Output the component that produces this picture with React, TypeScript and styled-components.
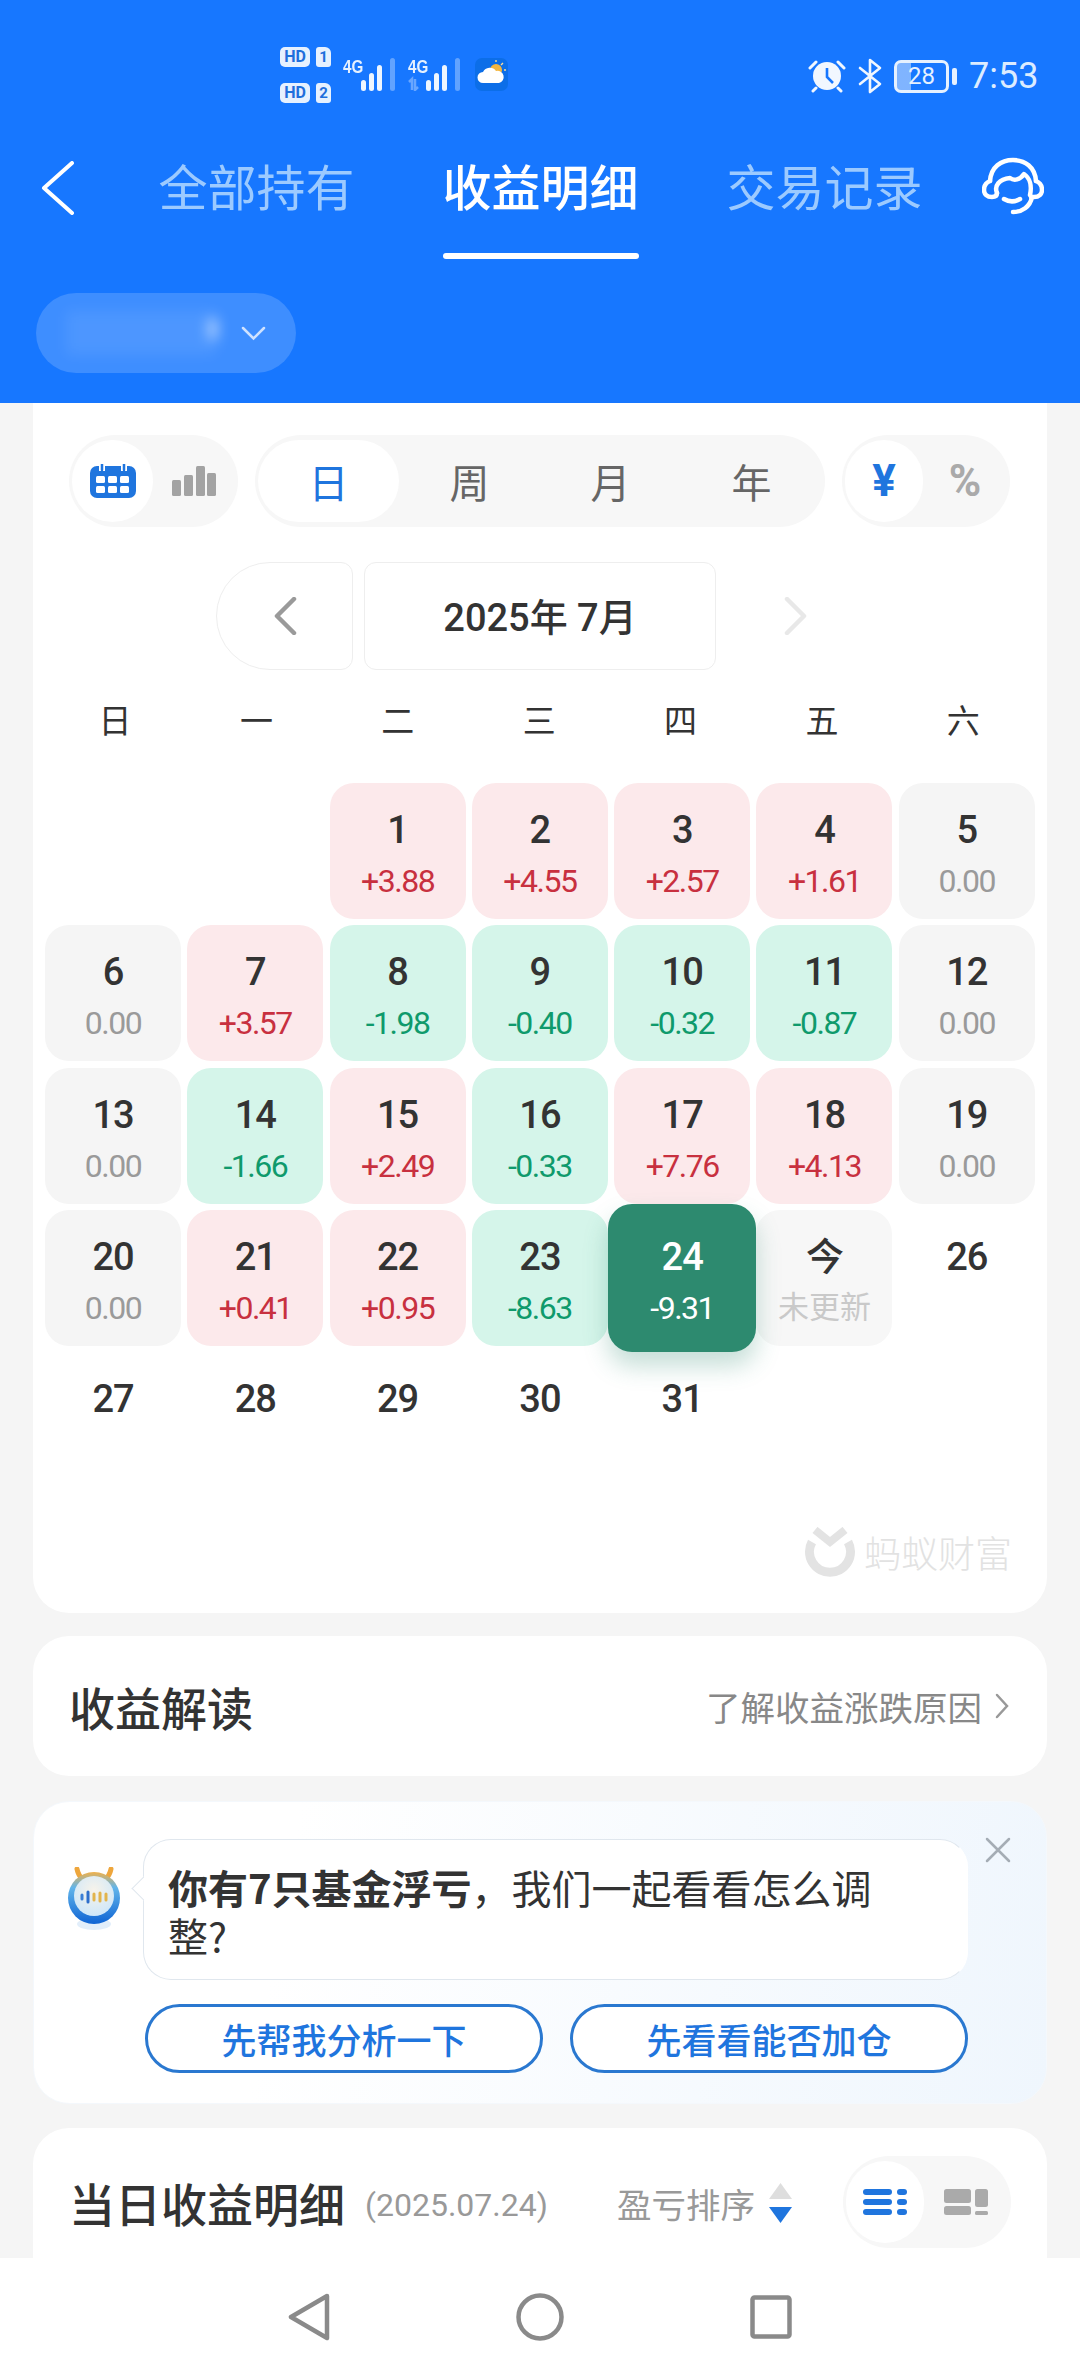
import { createGlobalStyle, styled } from 'styled-components';

const sans = `Roboto, "Noto Sans CJK SC", sans-serif`;
const cjk = `"Noto Sans CJK SC", Roboto, sans-serif`;

const GlobalStyle = createGlobalStyle`
  html, body {
    margin: 0;
    padding: 0;
    background: #f5f5f5;
  }
  * {
    box-sizing: border-box;
  }
`;

type Day = { date: string; value?: string; selected?: boolean; today?: boolean };

const days: (Day | null)[] = [
  null,
  null,
  { date: '1', value: '+3.88' },
  { date: '2', value: '+4.55' },
  { date: '3', value: '+2.57' },
  { date: '4', value: '+1.61' },
  { date: '5', value: '0.00' },
  { date: '6', value: '0.00' },
  { date: '7', value: '+3.57' },
  { date: '8', value: '-1.98' },
  { date: '9', value: '-0.40' },
  { date: '10', value: '-0.32' },
  { date: '11', value: '-0.87' },
  { date: '12', value: '0.00' },
  { date: '13', value: '0.00' },
  { date: '14', value: '-1.66' },
  { date: '15', value: '+2.49' },
  { date: '16', value: '-0.33' },
  { date: '17', value: '+7.76' },
  { date: '18', value: '+4.13' },
  { date: '19', value: '0.00' },
  { date: '20', value: '0.00' },
  { date: '21', value: '+0.41' },
  { date: '22', value: '+0.95' },
  { date: '23', value: '-8.63' },
  { date: '24', value: '-9.31', selected: true },
  { date: '今', value: '未更新', today: true },
  { date: '26' },
  { date: '27' },
  { date: '28' },
  { date: '29' },
  { date: '30' },
  { date: '31' },
];

type Tone = 'up' | 'down' | 'flat' | 'today' | 'selected' | 'none';

const toneOf = (day: Day): Tone => {
  if (day.selected) return 'selected';
  if (day.today) return 'today';
  if (!day.value) return 'none';
  if (day.value.startsWith('+')) return 'up';
  if (day.value.startsWith('-')) return 'down';
  return 'flat';
};

const cellBackground: Record<Tone, string> = {
  up: '#fce9eb',
  down: '#d5f5ea',
  flat: '#f5f5f5',
  today: '#f7f7f7',
  selected: '#2d8a6f',
  none: 'transparent',
};

const valueColor: Record<Tone, string> = {
  up: '#c8303f',
  down: '#0f9a6c',
  flat: '#9a9a9a',
  today: '#c9c9c9',
  selected: '#ffffff',
  none: '#333333',
};

const SignalBars = ({ arrows }: { arrows?: boolean }) => (
  <svg width="54" height="33" viewBox="0 0 54 33">
    {arrows && (
      <path
        d="M4 32V21L1 24M7 21V32L10 29"
        fill="none"
        stroke="#fff"
        strokeOpacity="0.35"
        strokeWidth="2.5"
      />
    )}
    <g transform="translate(18 0)" fill="#eef6ff">
      <rect x="0" y="22" width="5" height="11" rx="2.5" />
      <rect x="8" y="15" width="5" height="18" rx="2.5" />
      <rect x="16" y="7" width="5" height="26" rx="2.5" />
      <rect x="29" y="0" width="5" height="33" rx="2.5" fillOpacity="0.35" />
    </g>
  </svg>
);

const WeatherIcon = () => (
  <svg width="33" height="33" viewBox="0 0 33 33">
    <rect width="33" height="33" rx="7" fill="#0c6ee8" />
    <circle cx="21" cy="12" r="6" fill="#f3b63f" />
    <path d="M21 2v2M28 5l-2 2M31 12h-2" stroke="#f8dc9a" strokeWidth="1.4" />
    <path d="M8 25a5.5 5.5 0 0 1 0-11 7.5 7.5 0 0 1 13-1 6 6 0 0 1 3 12z" fill="#fff" />
  </svg>
);

const AlarmIcon = () => (
  <svg width="38" height="34" viewBox="0 0 38 34">
    <circle cx="19" cy="17" r="14" fill="#f1f7ff" />
    <path d="M19 9v9l6 6" fill="none" stroke="#1777ff" strokeWidth="2.6" />
    <path d="M2 9l6-6M36 9l-6-6" stroke="#f1f7ff" strokeWidth="3" strokeLinecap="round" />
    <path d="M8 29l-3 3M30 29l3 3" stroke="#f1f7ff" strokeWidth="3" strokeLinecap="round" />
  </svg>
);

const BluetoothIcon = () => (
  <svg width="24" height="36" viewBox="0 0 24 36">
    <path
      d="M2 10l20 16-10 8V2l10 8L2 26"
      fill="none"
      stroke="#f1f7ff"
      strokeWidth="2.6"
      strokeLinejoin="round"
      strokeLinecap="round"
    />
  </svg>
);

const BackIcon = () => (
  <svg width="34" height="54" viewBox="0 0 34 54">
    <path
      d="M31 2L3 27l28 25"
      fill="none"
      stroke="#fff"
      strokeWidth="4"
      strokeLinecap="round"
      strokeLinejoin="round"
    />
  </svg>
);

const HeadsetIcon = () => (
  <svg width="62" height="58" viewBox="0 0 62 58">
    <g fill="none" stroke="#fff" strokeWidth="4.5" strokeLinecap="round" strokeLinejoin="round">
      <path d="M8 24C9 10 19 3 31 3s22 7 23 21" />
      <path d="M8 24c-5 2-6 6-6 9 0 4 3 7 8 7 3 0 5-1 5-4" />
      <path d="M54 24c5 2 6 6 6 9 0 4-3 7-8 7h-3" />
      <path d="M15 36c-3-7 2-14 13-15 4 3 10 2 14-4 6 4 8 12 6 21" />
      <path d="M22 42c5 3 11 3 16 0" />
      <path d="M50 40c-2 10-10 15-19 15" />
    </g>
  </svg>
);

const SmallChevron = () => (
  <svg width="25" height="15" viewBox="0 0 25 15">
    <path d="M2 2l10.5 10.5L23 2" fill="none" stroke="#cfe2ff" strokeWidth="2.5" strokeLinecap="round" />
  </svg>
);

const CalendarIcon = () => (
  <svg width="46" height="34" viewBox="0 0 46 34">
    <rect y="2" width="46" height="32" rx="7" fill="#1f75de" />
    <path d="M12 0v7M34 0v7" stroke="#fff" strokeWidth="6" />
    <path d="M12 0v6M34 0v6" stroke="#1f75de" strokeWidth="2.5" strokeLinecap="round" />
    <g fill="#fff">
      {[6, 18, 30].map((x) =>
        [12, 22].map((y) => <rect key={`${x}-${y}`} x={x} y={y} width="9" height="7" rx="1.5" />),
      )}
    </g>
  </svg>
);

const BarsIcon = () => (
  <svg width="44" height="30" viewBox="0 0 44 30">
    <g fill="#a3a3a3">
      <rect x="0" y="14" width="9" height="16" rx="1.5" />
      <rect x="12" y="9" width="9" height="21" rx="1.5" />
      <rect x="24" y="0" width="9" height="30" rx="1.5" />
      <rect x="35" y="7" width="9" height="23" rx="1.5" />
    </g>
  </svg>
);

const NavChevron = ({ dir, color }: { dir: 'left' | 'right'; color: string }) => (
  <svg width="24" height="38" viewBox="0 0 24 38">
    <path
      d={dir === 'left' ? 'M21 2L4 19l17 17' : 'M3 2l17 17L3 36'}
      fill="none"
      stroke={color}
      strokeWidth="4.5"
      strokeLinecap="round"
      strokeLinejoin="round"
    />
  </svg>
);

const AntLogo = () => (
  <svg width="50" height="51" viewBox="0 0 50 51">
    <g fill="none" stroke="#e3e3e3">
      <path d="M10 3l15 12L40 3" strokeWidth="8" />
      <path d="M7 15a20.5 20.5 0 1 0 36 0" strokeWidth="9" />
    </g>
  </svg>
);

const RightArrow = () => (
  <svg width="16" height="26" viewBox="0 0 16 26">
    <path d="M3 2l10 11L3 24" fill="none" stroke="#999" strokeWidth="2.5" strokeLinecap="round" />
  </svg>
);

const AssistantAvatar = () => (
  <svg width="54" height="64" viewBox="0 0 54 64">
    <defs>
      <linearGradient id="ring" x1="0" y1="0" x2="0" y2="1">
        <stop offset="0" stopColor="#f0b14b" />
        <stop offset="0.3" stopColor="#62b5ea" />
        <stop offset="1" stopColor="#0f64d4" />
      </linearGradient>
      <radialGradient id="face" cx="0.5" cy="0.35" r="0.7">
        <stop offset="0" stopColor="#f7f3ea" />
        <stop offset="1" stopColor="#cbe6fb" />
      </radialGradient>
    </defs>
    <ellipse cx="27" cy="57" rx="17" ry="6" fill="#cfe3f7" opacity="0.6" />
    <path
      d="M10 2c1 5 3 8 6 11M44 2c-1 5-3 8-6 11"
      fill="none"
      stroke="#eea63c"
      strokeWidth="5"
      strokeLinecap="round"
    />
    <circle cx="27" cy="31" r="26" fill="url(#ring)" />
    <circle cx="27" cy="29" r="20" fill="url(#face)" />
    <g strokeWidth="3" strokeLinecap="round">
      <path d="M15 28v4" stroke="#3a7fd6" />
      <path d="M21 25v10" stroke="#2d6fcc" />
      <path d="M27 27v6" stroke="#e2b44c" />
      <path d="M33 26v8" stroke="#e2b44c" />
      <path d="M39 27v6" stroke="#e2b44c" />
    </g>
  </svg>
);

const CloseIcon = () => (
  <svg width="26" height="26" viewBox="0 0 26 26">
    <path d="M2 2l22 22M24 2L2 24" stroke="#a5adb5" strokeWidth="2.5" strokeLinecap="round" />
  </svg>
);

const SortIcon = () => (
  <svg width="23" height="40" viewBox="0 0 23 40">
    <path d="M11.5 0L23 16H0z" fill="#dedede" />
    <path d="M0 24h23L11.5 40z" fill="#1f75de" />
  </svg>
);

const ListIcon = () => (
  <svg width="44" height="26" viewBox="0 0 44 26">
    <g fill="#1f75de">
      {[0, 10, 20].map((y) => (
        <g key={y}>
          <rect x="0" y={y} width="29" height="6" rx="3" />
          <rect x="34" y={y} width="10" height="6" rx="3" />
        </g>
      ))}
    </g>
  </svg>
);

const CardsIcon = () => (
  <svg width="44" height="26" viewBox="0 0 44 26">
    <g fill="#aaaaaa">
      <rect x="0" y="0" width="27" height="14" rx="2.5" />
      <rect x="0" y="17" width="27" height="9" rx="2.5" />
      <rect x="31" y="0" width="13" height="18" rx="2.5" />
      <rect x="31" y="22" width="13" height="4" rx="1.5" />
    </g>
  </svg>
);

const App = () => (
  <>
    <GlobalStyle />
    <Screen>
      <Header>
        <StatusBar>
          <SimColumn>
            <SimRow>
              <HdBadge>HD</HdBadge>
              <SimBadge>1</SimBadge>
            </SimRow>
            <SimRow>
              <HdBadge>HD</HdBadge>
              <SimBadge>2</SimBadge>
            </SimRow>
          </SimColumn>
          <SignalGroup>
            <NetworkLabel>4G</NetworkLabel>
            <SignalBars />
          </SignalGroup>
          <SignalGroup>
            <NetworkLabel>4G</NetworkLabel>
            <SignalBars arrows />
          </SignalGroup>
          <WeatherSlot>
            <WeatherIcon />
          </WeatherSlot>
          <StatusRight>
            <AlarmIcon />
            <BluetoothIcon />
            <BatteryWrap>
              <Battery>28</Battery>
              <BatteryTip />
            </BatteryWrap>
            <Clock>7:53</Clock>
          </StatusRight>
        </StatusBar>

        <TabRow>
          <BackSlot>
            <BackIcon />
          </BackSlot>
          <Tabs>
            <Tab>
              <TabLabel>全部持有</TabLabel>
            </Tab>
            <Tab>
              <TabLabel $active>收益明细</TabLabel>
              <TabLine />
            </Tab>
            <Tab>
              <TabLabel>交易记录</TabLabel>
            </Tab>
          </Tabs>
          <HeadsetSlot>
            <HeadsetIcon />
          </HeadsetSlot>
        </TabRow>

        <AccountPill>
          <BlurredName />
          <SmallChevron />
        </AccountPill>
      </Header>

      <Content>
        <CalendarCard>
          <Controls>
            <Segment>
              <SegmentItem $active $width={81}>
                <CalendarIcon />
              </SegmentItem>
              <SegmentItem $width={82}>
                <BarsIcon />
              </SegmentItem>
            </Segment>
            <Segment>
              <SegmentItem $active $width={141}>
                <PeriodLabel $active>日</PeriodLabel>
              </SegmentItem>
              {['周', '月', '年'].map((label) => (
                <SegmentItem key={label} $width={141}>
                  <PeriodLabel>{label}</PeriodLabel>
                </SegmentItem>
              ))}
            </Segment>
            <Segment>
              <SegmentItem $active $width={78}>
                <UnitLabel $active>¥</UnitLabel>
              </SegmentItem>
              <SegmentItem $width={84}>
                <UnitLabel>%</UnitLabel>
              </SegmentItem>
            </Segment>
          </Controls>

          <MonthNav>
            <PrevButton>
              <NavChevron dir="left" color="#9a9a9a" />
            </PrevButton>
            <MonthLabel>2025年 7月</MonthLabel>
            <NextButton>
              <NavChevron dir="right" color="#e8e8e8" />
            </NextButton>
          </MonthNav>

          <Weekdays>
            {['日', '一', '二', '三', '四', '五', '六'].map((d) => (
              <Weekday key={d}>{d}</Weekday>
            ))}
          </Weekdays>

          <DayGrid>
            {days.map((day, i) => {
              if (!day) return <div key={i} />;
              const tone = toneOf(day);
              return (
                <DayCell key={day.date} $tone={tone}>
                  <DayNumber $tone={tone}>{day.date}</DayNumber>
                  {day.value && <DayValue $tone={tone}>{day.value}</DayValue>}
                </DayCell>
              );
            })}
          </DayGrid>

          <Brand>
            <AntLogo />
            <BrandName>蚂蚁财富</BrandName>
          </Brand>
        </CalendarCard>

        <InsightCard>
          <CardTitle>收益解读</CardTitle>
          <InsightLink>
            了解收益涨跌原因
            <RightArrow />
          </InsightLink>
        </InsightCard>

        <AdviceCard>
          <AvatarSlot>
            <AssistantAvatar />
          </AvatarSlot>
          <AdviceBody>
            <Bubble>
              <strong>你有7只基金浮亏</strong>，我们一起看看怎么调整?
            </Bubble>
            <AdviceActions>
              <AdviceButton>先帮我分析一下</AdviceButton>
              <AdviceButton>先看看能否加仓</AdviceButton>
            </AdviceActions>
          </AdviceBody>
          <CloseSlot>
            <CloseIcon />
          </CloseSlot>
        </AdviceCard>

        <DetailCard>
          <DetailTitle>当日收益明细</DetailTitle>
          <DetailDate>(2025.07.24)</DetailDate>
          <SortGroup>
            <SortLabel>盈亏排序</SortLabel>
            <SortIcon />
          </SortGroup>
          <Segment>
            <SegmentItem $active $width={78}>
              <ListIcon />
            </SegmentItem>
            <SegmentItem $width={84}>
              <CardsIcon />
            </SegmentItem>
          </Segment>
        </DetailCard>
      </Content>

      <NavBar>
        <NavSlot>
          <svg width="42" height="48" viewBox="0 0 42 48">
            <path d="M39 3L3 24l36 21z" fill="none" stroke="#8a8a8a" strokeWidth="4.5" strokeLinejoin="round" />
          </svg>
        </NavSlot>
        <NavSlot>
          <svg width="48" height="48" viewBox="0 0 48 48">
            <circle cx="24" cy="24" r="21.5" fill="none" stroke="#8a8a8a" strokeWidth="4.5" />
          </svg>
        </NavSlot>
        <NavSlot>
          <svg width="42" height="44" viewBox="0 0 42 44">
            <rect x="2.5" y="2.5" width="37" height="39" rx="2" fill="none" stroke="#8a8a8a" strokeWidth="4.5" />
          </svg>
        </NavSlot>
      </NavBar>
    </Screen>
  </>
);

const Screen = styled.div`
  width: 1080px;
  height: 2376px;
  display: flex;
  flex-direction: column;
  overflow: hidden;
  background: #f5f5f5;
  font-family: ${cjk};
  color: #333;
`;

const Header = styled.header`
  flex: none;
  height: 403px;
  background: #1777ff;
`;

const StatusBar = styled.div`
  height: 116px;
  display: flex;
  padding: 47px 43px 0 280px;
`;

const SimColumn = styled.div`
  display: flex;
  flex-direction: column;
  gap: 16px;
  width: 60px;
`;

const SimRow = styled.div`
  display: flex;
  gap: 6px;
`;

const HdBadge = styled.span`
  width: 30px;
  height: 20px;
  border-radius: 5px;
  background: #e6f1ff;
  color: #1f6fdc;
  font: 700 16px/20px ${sans};
  text-align: center;
`;

const SimBadge = styled.span`
  width: 15px;
  height: 20px;
  border-radius: 3px 6px 3px 3px;
  background: #e6f1ff;
  color: #1f6fdc;
  font: 700 15px/20px ${sans};
  text-align: center;
`;

const SignalGroup = styled.div`
  position: relative;
  display: flex;
  margin-top: 11px;
  margin-left: 3px;
  width: 62px;
  height: 33px;
`;

const NetworkLabel = styled.span`
  position: absolute;
  left: 0;
  top: 0;
  color: #e6f1ff;
  font: 700 19px/17px "Liberation Sans", sans-serif;
  transform: scaleX(0.8);
  transform-origin: left;
`;

const WeatherSlot = styled.div`
  margin-top: 11px;
  margin-left: 5px;
  height: 33px;
`;

const StatusRight = styled.div`
  margin-left: auto;
  display: flex;
  align-items: center;
  gap: 12px;
  height: 50px;
  margin-top: 4px;
`;

const BatteryWrap = styled.div`
  display: flex;
  align-items: center;
  gap: 3px;
`;

const Battery = styled.div`
  width: 55px;
  height: 33px;
  border: 3px solid #e6f1ff;
  border-radius: 7px;
  background: linear-gradient(90deg, rgba(255, 255, 255, 0.45) 28%, transparent 28%);
  color: #e6f1ff;
  font: 400 24px/27px ${sans};
  text-align: center;
`;

const BatteryTip = styled.div`
  width: 5px;
  height: 17px;
  border-radius: 2px;
  background: #e6f1ff;
`;

const Clock = styled.span`
  width: 68px;
  color: #dcecff;
  font: 400 36px/50px ${sans};
  white-space: nowrap;
`;

const TabRow = styled.nav`
  height: 146px;
  display: flex;
  align-items: flex-start;
`;

const BackSlot = styled.div`
  width: 160px;
  padding: 45px 0 0 41px;
`;

const Tabs = styled.div`
  display: flex;
  gap: 91px;
`;

const Tab = styled.div`
  width: 193px;
  padding-top: 45px;
  display: flex;
  flex-direction: column;
  align-items: center;
`;

const TabLabel = styled.span<{ $active?: boolean }>`
  font-size: 49px;
  line-height: 48px;
  white-space: nowrap;
  font-weight: ${(p) => (p.$active ? 500 : 400)};
  color: ${(p) => (p.$active ? '#fff' : '#9ccaff')};
`;

const TabLine = styled.div`
  width: 196px;
  height: 6px;
  margin-top: 44px;
  border-radius: 3px;
  background: #fff;
`;

const HeadsetSlot = styled.div`
  margin-left: 61px;
  padding-top: 41px;
`;

const AccountPill = styled.div`
  width: 260px;
  height: 80px;
  margin: 31px 0 0 36px;
  border-radius: 40px;
  background: rgba(255, 255, 255, 0.17);
  display: flex;
  align-items: center;
  padding: 0 30px;
  gap: 25px;
`;

const BlurredName = styled.div`
  position: relative;
  width: 150px;
  height: 44px;
  background: rgba(255, 255, 255, 0.08);
  filter: blur(7px);

  &::after {
    content: '';
    position: absolute;
    right: 0;
    top: 8px;
    width: 6px;
    height: 20px;
    background: rgba(255, 255, 255, 0.9);
  }
`;

const Content = styled.main`
  flex: 1;
  min-height: 0;
  overflow: hidden;
  display: flex;
  flex-direction: column;
  gap: 24px;
  padding: 0 33px;
`;

const CalendarCard = styled.section`
  flex: none;
  height: 1210px;
  background: #fff;
  border-radius: 0 0 36px 36px;
  padding: 32px 0 0 12px;
  margin-bottom: -1px;
`;

const Controls = styled.div`
  display: flex;
  gap: 17px;
  padding-left: 24px;
`;

const Segment = styled.div`
  flex: none;
  height: 92px;
  padding: 5px 3px;
  border-radius: 46px;
  background: #f7f7f7;
  display: flex;
`;

const SegmentItem = styled.div<{ $active?: boolean; $width: number }>`
  width: ${(p) => p.$width}px;
  border-radius: 41px;
  display: flex;
  align-items: center;
  justify-content: center;
  background: ${(p) => (p.$active ? '#fff' : 'transparent')};
`;

const PeriodLabel = styled.span<{ $active?: boolean }>`
  font-size: 40px;
  color: ${(p) => (p.$active ? '#1f75de' : '#666')};
`;

const UnitLabel = styled.span<{ $active?: boolean }>`
  font: 700 44px/1 ${sans};
  color: ${(p) => (p.$active ? '#1f75de' : '#aaa')};
`;

const MonthNav = styled.div`
  display: flex;
  align-items: center;
  gap: 11px;
  height: 108px;
  margin: 35px 0 0 171px;
`;

const PrevButton = styled.div`
  width: 137px;
  height: 108px;
  border: 1px solid #eeeeee;
  border-radius: 54px 12px 12px 54px;
  display: flex;
  align-items: center;
  justify-content: center;
`;

const MonthLabel = styled.div`
  width: 352px;
  height: 108px;
  border: 1px solid #eeeeee;
  border-radius: 12px;
  padding-top: 3px;
  display: flex;
  align-items: center;
  justify-content: center;
  font: 500 38px/1 ${sans};
  color: #333;
`;

const NextButton = styled.div`
  width: 137px;
  height: 108px;
  display: flex;
  align-items: center;
  justify-content: center;
  margin-left: -11px;
  padding-left: 22px;
`;

const Weekdays = styled.div`
  display: grid;
  grid-template-columns: repeat(7, 136px);
  column-gap: 5.4px;
  height: 64px;
  margin: 17px 0 0 2px;
  align-items: center;
  text-align: center;
`;

const Weekday = styled.div`
  font-size: 33px;
  line-height: 64px;
  color: #333;
`;

const DayGrid = styled.div`
  display: grid;
  grid-template-columns: repeat(7, 136px);
  grid-auto-rows: 136px;
  gap: 6.3px;
  margin-top: 32px;
`;

const DayCell = styled.div<{ $tone: Tone }>`
  display: flex;
  flex-direction: column;
  align-items: center;
  border-radius: 24px;
  background: ${(p) => cellBackground[p.$tone]};
  padding-top: 27px;
  ${(p) =>
    p.$tone === 'selected' &&
    `
    position: relative;
    margin: -6px;
    padding-top: 33px;
    box-shadow: 0 14px 24px rgba(45, 138, 111, 0.28);
  `}
`;

const DayNumber = styled.span<{ $tone: Tone }>`
  font: 500 38px/40px ${sans};
  letter-spacing: -1px;
  color: ${(p) => (p.$tone === 'selected' ? '#fff' : '#333')};
`;

const DayValue = styled.span<{ $tone: Tone }>`
  margin-top: 13px;
  font: 400 ${(p) => (p.$tone === 'today' ? 31 : 32)}px/36px ${sans};
  letter-spacing: ${(p) => (p.$tone === 'today' ? 0 : -1.5)}px;
  color: ${(p) => valueColor[p.$tone]};
`;

const Brand = styled.div`
  display: flex;
  justify-content: flex-end;
  align-items: center;
  gap: 9px;
  height: 51px;
  margin-top: 39px;
  padding-right: 35px;
`;

const BrandName = styled.span`
  font-size: 37px;
  font-weight: 300;
  line-height: 51px;
  color: #e2e2e2;
  white-space: nowrap;
`;

const InsightCard = styled.section`
  flex: none;
  height: 140px;
  background: #fff;
  border-radius: 36px;
  padding: 0 37px 0 36px;
  display: flex;
  align-items: center;
  justify-content: space-between;
`;

const CardTitle = styled.h2`
  margin: 0;
  font-size: 46px;
  line-height: 60px;
  font-weight: 500;
  color: #333;
  white-space: nowrap;
`;

const DetailTitle = styled(CardTitle)`
  margin-top: 16px;
`;

const InsightLink = styled.div`
  display: flex;
  align-items: center;
  gap: 12px;
  font-size: 34.5px;
  color: #888;
`;

const AdviceCard = styled.section`
  flex: none;
  height: 303px;
  border-radius: 36px;
  border: 1px solid #f4f8fc;
  background: linear-gradient(100deg, #ffffff 25%, #eff6fd 100%);
  padding: 37px 0 0 33px;
  display: grid;
  grid-template-columns: 53px 825px 26px;
  column-gap: 23px;
  margin-top: 1px;
`;

const AvatarSlot = styled.div`
  padding-top: 28px;
`;

const AdviceBody = styled.div`
  display: flex;
  flex-direction: column;
  gap: 24px;
`;

const Bubble = styled.div`
  position: relative;
  height: 141px;
  padding: 23px 70px 0 24px;
  border-radius: 28px;
  background: #fff;
  border: 1px solid #e0e7ee;
  border-right-color: #fff;
  font-size: 40px;
  line-height: 48px;
  color: #333;

  strong {
    font-weight: 700;
  }

  &::before {
    content: '';
    position: absolute;
    left: -9px;
    top: 40px;
    width: 16px;
    height: 16px;
    background: #fff;
    border-left: 1px solid #e0e7ee;
    border-bottom: 1px solid #e0e7ee;
    transform: rotate(45deg);
  }
`;

const AdviceActions = styled.div`
  display: grid;
  grid-template-columns: 398px 398px;
  column-gap: 27px;
  padding-left: 2px;
`;

const AdviceButton = styled.div`
  height: 69px;
  border: 3px solid #2a78d0;
  border-radius: 35px;
  background: #fff;
  display: flex;
  align-items: center;
  justify-content: center;
  font-size: 35px;
  font-weight: 500;
  color: #1f75de;
`;

const CloseSlot = styled.div`
  margin: -2px 0 0 -6px;
`;

const DetailCard = styled.section`
  flex: none;
  height: 200px;
  background: #fff;
  border-radius: 36px 36px 0 0;
  padding: 28px 36px 0 36px;
  display: flex;
  align-items: flex-start;
`;

const DetailDate = styled.span`
  margin: 29px 0 0 20px;
  font: 400 32px/40px ${sans};
  color: #999;
  white-space: nowrap;
`;

const SortGroup = styled.div`
  display: flex;
  align-items: center;
  gap: 14px;
  margin: 27px 51px 0 auto;
`;

const SortLabel = styled.span`
  font-size: 34.5px;
  line-height: 40px;
  color: #999;
  white-space: nowrap;
`;

const NavBar = styled.footer`
  flex: none;
  height: 118px;
  background: #fff;
  display: grid;
  grid-template-columns: repeat(3, 231px);
  justify-content: center;
`;

const NavSlot = styled.div`
  display: flex;
  align-items: center;
  justify-content: center;
`;

export default App;
